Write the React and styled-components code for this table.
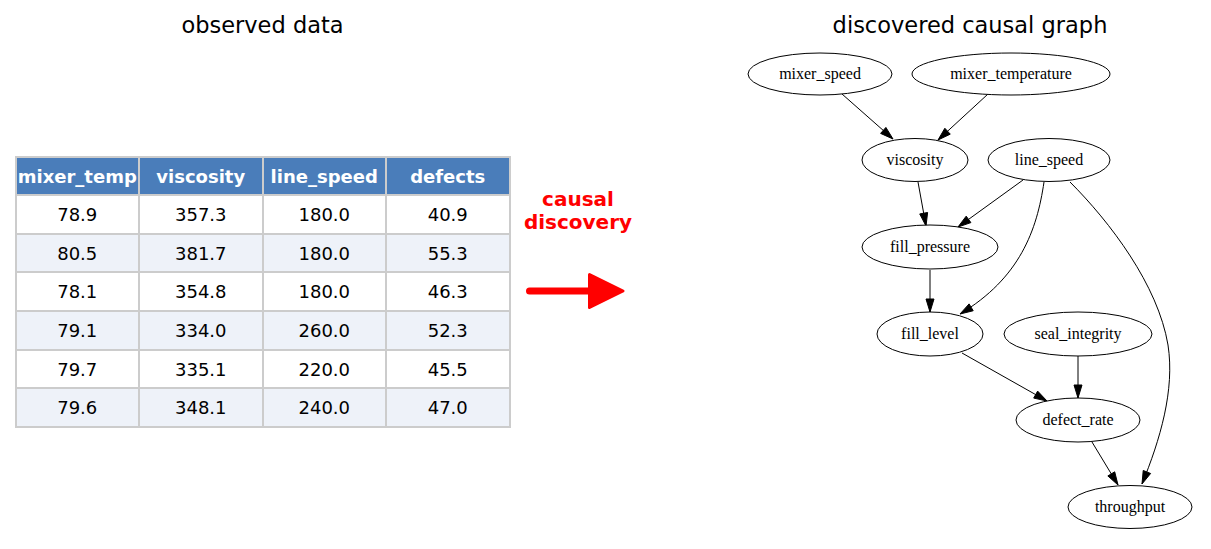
import React from "react";
import styled, { createGlobalStyle } from "styled-components";

const GlobalStyle = createGlobalStyle`
  html, body {
    margin: 0;
    padding: 0;
    background: #ffffff;
  }
  body {
    font-family: "DejaVu Sans", "Liberation Sans", sans-serif;
    color: #000;
  }
`;

const columns = ["mixer_temp", "viscosity", "line_speed", "defects"];

const rows = [
  ["78.9", "357.3", "180.0", "40.9"],
  ["80.5", "381.7", "180.0", "55.3"],
  ["78.1", "354.8", "180.0", "46.3"],
  ["79.1", "334.0", "260.0", "52.3"],
  ["79.7", "335.1", "220.0", "45.5"],
  ["79.6", "348.1", "240.0", "47.0"],
];

const nodes = [
  { id: "mixer_speed", x: 820, y: 74, rx: 72, ry: 21 },
  { id: "mixer_temperature", x: 1011, y: 74, rx: 99, ry: 21 },
  { id: "viscosity", x: 915, y: 160, rx: 53, ry: 21.5 },
  { id: "line_speed", x: 1049, y: 160, rx: 61, ry: 21.5 },
  { id: "fill_pressure", x: 930, y: 247, rx: 68, ry: 22 },
  { id: "fill_level", x: 930, y: 334, rx: 53, ry: 22 },
  { id: "seal_integrity", x: 1078, y: 334, rx: 74, ry: 22 },
  { id: "defect_rate", x: 1078, y: 420, rx: 62, ry: 22 },
  { id: "throughput", x: 1130, y: 507, rx: 62, ry: 21.5 },
];

// from = point the arrowhead points away from, tip = where it lands
const edges = [
  { d: "M842,94 L893,139", from: [842, 94], tip: [893, 139] },
  { d: "M988,94 L938,140", from: [988, 94], tip: [938, 140] },
  { d: "M918,182 L926,226", from: [918, 182], tip: [926, 226] },
  { d: "M1023,180 L958,227", from: [1023, 180], tip: [958, 227] },
  { d: "M1044,182 C1037,230 1020,278 960,314", from: [1020, 278], tip: [960, 314] },
  {
    d: "M1070,182 C1110,222 1158,285 1168,345 C1175,390 1160,440 1142,484",
    from: [1160, 440],
    tip: [1142, 484],
  },
  { d: "M930,270 L930,312", from: [930, 270], tip: [930, 312] },
  { d: "M962,353 L1047,401", from: [962, 353], tip: [1047, 401] },
  { d: "M1078,356 L1078,398", from: [1078, 356], tip: [1078, 398] },
  { d: "M1092,442 L1118,485", from: [1092, 442], tip: [1118, 485] },
];

const arrowHead = (from, tip, len = 13, half = 4) => {
  const dx = tip[0] - from[0];
  const dy = tip[1] - from[1];
  const l = Math.hypot(dx, dy);
  const ux = dx / l;
  const uy = dy / l;
  const bx = tip[0] - ux * len;
  const by = tip[1] - uy * len;
  return [
    `${tip[0]},${tip[1]}`,
    `${bx - uy * half},${by + ux * half}`,
    `${bx + uy * half},${by - ux * half}`,
  ].join(" ");
};

const App = () => {
  return (
    <>
      <GlobalStyle />
      <Page>
        <DataPanel>
          <Title>observed data</Title>
          <DataTable>
            <thead>
              <tr>
                {columns.map((c) => (
                  <HeadCell key={c}>{c}</HeadCell>
                ))}
              </tr>
            </thead>
            <tbody>
              {rows.map((r, i) => (
                <tr key={i}>
                  {r.map((v, j) => (
                    <Cell key={j} $alt={i % 2 === 1}>
                      {v}
                    </Cell>
                  ))}
                </tr>
              ))}
            </tbody>
          </DataTable>
        </DataPanel>

        <Bridge>
          <BridgeLabel>
            causal
            <br />
            discovery
          </BridgeLabel>
          <BigArrow viewBox="525 271 106 40" width="106" height="40">
            <line x1="529.5" y1="291" x2="595" y2="291" stroke="#ff0000" strokeWidth="7" strokeLinecap="round" />
            <polygon
              points="589.5,274.5 623,291 589.5,307.5"
              fill="#ff0000"
              stroke="#ff0000"
              strokeWidth="3"
              strokeLinejoin="round"
            />
          </BigArrow>
        </Bridge>

        <GraphPanel>
          <Title>discovered causal graph</Title>
          <GraphSvg viewBox="735 45 470 504" width="470" height="504">
            {edges.map((e, i) => (
              <g key={i}>
                <path d={e.d} fill="none" stroke="#000" strokeWidth="1" />
                <polygon points={arrowHead(e.from, e.tip)} fill="#000" stroke="#000" strokeWidth="1" />
              </g>
            ))}
            {nodes.map((n) => (
              <g key={n.id}>
                <ellipse cx={n.x} cy={n.y} rx={n.rx} ry={n.ry} fill="#fff" stroke="#000" strokeWidth="1" />
                <NodeLabel x={n.x} y={n.y + 5} textAnchor="middle">
                  {n.id}
                </NodeLabel>
              </g>
            ))}
          </GraphSvg>
        </GraphPanel>
      </Page>
    </>
  );
};

export default App;

const Page = styled.div`
  display: flex;
  width: 1211px;
  height: 549px;
  overflow: hidden;
  background: #fff;
`;

const DataPanel = styled.div`
  width: 525px;
  display: flex;
  flex-direction: column;
  align-items: center;
`;

const Title = styled.div`
  padding-top: 12px;
  font-size: 22.5px;
  line-height: 26px;
  color: #000;
  text-align: center;
  white-space: nowrap;
`;

const DataTable = styled.table`
  margin-top: 118px;
  width: 496px;
  table-layout: fixed;
  border-collapse: collapse;
  font-size: 18px;
`;

const HeadCell = styled.th`
  height: 36px;
  padding: 0;
  border: 2px solid #cccccc;
  background: #4a7dba;
  color: #ffffff;
  font-weight: bold;
  text-align: center;
  white-space: nowrap;
  overflow: hidden;
`;

const Cell = styled.td`
  height: 36.7px;
  padding: 0;
  border: 2px solid #cccccc;
  background: ${(p) => (p.$alt ? "#eef2f9" : "#ffffff")};
  color: #000;
  text-align: center;
`;

const Bridge = styled.div`
  width: 106px;
  display: flex;
  flex-direction: column;
  align-items: center;
  padding-top: 188px;
`;

const BridgeLabel = styled.div`
  color: #ff0000;
  font-weight: bold;
  font-size: 20px;
  line-height: 23px;
  text-align: center;
  white-space: nowrap;
`;

const BigArrow = styled.svg`
  display: block;
  margin-top: 37px;
  align-self: flex-start;
`;

const GraphPanel = styled.div`
  width: 470px;
  margin-left: 104px;
  display: flex;
  flex-direction: column;
  align-items: center;
`;

const GraphSvg = styled.svg`
  display: block;
  margin-top: 7px;
`;

const NodeLabel = styled.text`
  font-family: "Liberation Serif", "Times New Roman", serif;
  font-size: 16px;
  fill: #000;
`;
